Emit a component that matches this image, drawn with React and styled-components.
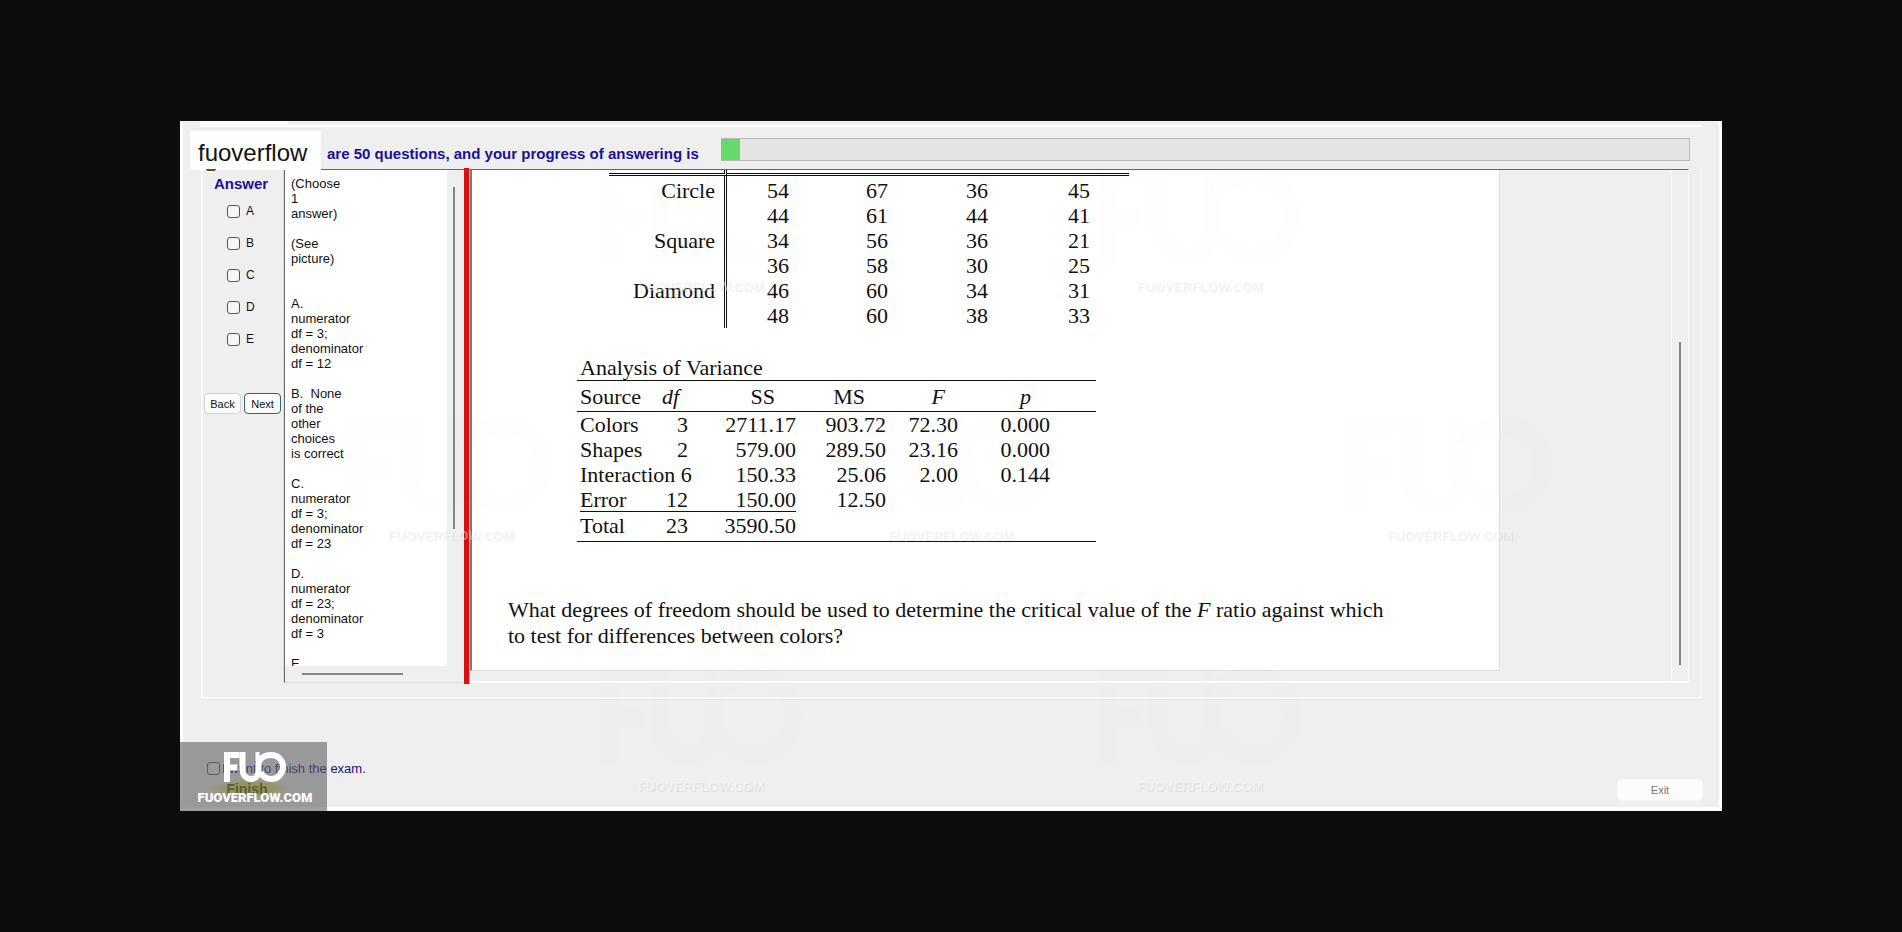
import React from 'react';
import styled, { createGlobalStyle, css } from 'styled-components';

const SANS = '"Liberation Sans", Arial, sans-serif';
const SERIF = '"Liberation Serif", "Times New Roman", serif';

const GlobalStyle = createGlobalStyle`
  *, *::before, *::after { box-sizing: border-box; }
  body { margin: 0; background: #0d0d0d; font-family: ${SANS}; color: #111; }
`;

const Stage = styled.main`
  min-height: 100vh;
  padding: 0 180px;
  display: flex;
  flex-direction: column;
  justify-content: center;
`;

const ExamWindow = styled.div`
  position: relative;
  background: #efefef;
  border: solid #fff;
  border-width: 0 3px 4px;
`;

const Header = styled.header`
  display: flex;
  align-items: flex-start;
  height: 48px;
  padding: 0 29px 0 7px;
  background:
    linear-gradient(#fbfbfb, #fbfbfb) 17px 0 / 88px 6px no-repeat,
    linear-gradient(#fff, #fff) 105px 4px / calc(100% - 122px) 2px no-repeat,
    #efefef;
`;

const SiteName = styled.div`
  position: relative;
  z-index: 2;
  width: 131px;
  height: 39px;
  margin-top: 10px;
  padding-left: 8px;
  background: #fff;
  font-size: 24px;
  line-height: 44px;

  &::after {
    content: '';
    position: absolute;
    left: 16px;
    bottom: -1px;
    width: 10px;
    height: 2px;
    border-radius: 0 0 5px 5px;
    background: #55551a;
  }
`;

const ProgressLabel = styled.label`
  margin: 23px 22px 0 6px;
  color: #1a1096;
  font-size: 15px;
  font-weight: bold;
  line-height: 20px;
  white-space: nowrap;
`;

const ProgressTrack = styled.div`
  flex: 1;
  height: 23px;
  margin-top: 17px;
  border: 1px solid #b9b9b9;
  border-left: 0;
  background: #e4e4e4;
`;

const ProgressFill = styled.div`
  height: 100%;
  background: #66d96b;
`;

const GroupBox = styled.section`
  display: flex;
  height: 530px;
  margin: 0 17px 0 18px;
  padding-right: 12px;
  border: solid #fafafa;
  border-width: 0 1px 2px 2px;
  box-shadow: 0 1px 0 #e4e4e4;
`;

const AnswerPanel = styled.fieldset`
  width: 81px;
  min-width: 0;
  height: 514px;
  margin: 0;
  padding: 5px 0 0;
  border: 0;
  border-right: 1px solid #e0e0e0;
`;

const AnswerTitle = styled.legend`
  float: left;
  width: 100%;
  padding: 0 0 0 11px;
  color: #1a1096;
  font-size: 15px;
  font-weight: bold;
  line-height: 20px;
`;

const ChoiceList = styled.div`
  clear: both;
  display: flex;
  flex-direction: column;
  padding: 1px 0 0 24px;
`;

const Choice = styled.label`
  display: flex;
  align-items: center;
  gap: 6px;
  height: 32px;
  font-size: 12px;
`;

const Tick = styled.input`
  appearance: none;
  width: 13px;
  height: 13px;
  margin: 0;
  border: 1px solid #555;
  border-radius: 3px;
  background: #f6f6f6;
`;

const NavButtons = styled.div`
  display: flex;
  gap: 3px;
  padding: 38px 0 0 1px;
`;

const Button = styled.button`
  height: 21px;
  padding: 0;
  border: 1px solid #d2d2d2;
  border-radius: 4px;
  background: #fcfcfc;
  color: #111;
  font: 11px ${SANS};
  ${(p) => p.$kind === 'nav' && css`width: 37px;`}
  ${(p) => p.$focused && css`border-color: #2c6780;`}
  ${(p) => p.$kind === 'exit' && css`
    width: 86px;
    height: 22px;
    border-color: #f6f6f6;
    color: #777;
  `}
`;

const ChoicesPane = styled.div`
  display: flex;
  flex-direction: column;
  width: 180px;
  height: 514px;
  border: 1px solid #666;
  border-bottom-color: #dcdcdc;
  border-right: 0;
`;

const ChoicesRow = styled.div`
  display: flex;
  height: 496px;
`;

const ChoicesText = styled.div`
  width: 162px;
  padding: 6px 0 0 6px;
  overflow: hidden;
  background: #fff;
  font-size: 13px;
  line-height: 15px;
  white-space: pre;
`;

const ScrollColumn = styled.div`
  width: 17px;
  padding: ${(p) => p.$top}px 0 0 6px;
`;

const Thumb = styled.div`
  width: ${(p) => p.$w}px;
  height: ${(p) => p.$h}px;
  background: #858585;
`;

const ScrollRow = styled.div`
  padding: 7px 0 0 17px;
`;

const Splitter = styled.div`
  width: 6px;
  height: 516px;
  margin-top: -1px;
  background: linear-gradient(90deg, #db0f12 5px, #e8aaa4 5px);
`;

const PicturePane = styled.div`
  flex: 1;
  display: flex;
  justify-content: space-between;
  height: 514px;
  border: solid;
  border-width: 1px 1px 2px 0;
  border-color: #666 #fff #fff #fff;
`;

const Picture = styled.article`
  width: 1030px;
  height: 501px;
  border: solid #dedede;
  border-width: 0 1px 1px 2px;
  border-left-color: #857676;
  background: #fff;
  font: 22px/25px ${SERIF};
  color: #111;
`;

const ShapeTable = styled.table`
  margin-left: 137px;
  border-spacing: 0;
  border-collapse: separate;
  table-layout: fixed;
  width: 520px;

  th, td { padding: 0; font-weight: normal; height: 25px; text-align: center; }
  th { padding-right: 9px; text-align: right; border-right: 3px double #111; }
  thead th, thead td { height: 6px; border-bottom: 3px double #111; }
  tbody tr:first-child > * { height: 27px; padding-top: 2px; }
`;

const AnovaTable = styled.table`
  width: 519px;
  margin: 27px 0 0 105px;
  border-spacing: 0;
  table-layout: fixed;
  border-bottom: 1px solid #111;

  caption { padding-left: 3px; text-align: left; }
  th, td { padding: 0; font-weight: normal; height: 25px; text-align: right; white-space: nowrap; }
  th:first-child { padding-left: 3px; text-align: left; }
  thead th {
    height: 32px;
    border: solid #111;
    border-width: 1px 0;
  }
  tbody tr:last-child > * { height: 29px; padding: 1px 0 3px; }
  tbody tr:last-child > th { padding-left: 3px; }
`;

const HeadCell = styled.th`
  && { padding-right: ${(p) => p.$inset || 0}px; }
`;

const SumCell = styled.td`
  background: linear-gradient(#111, #111) left bottom / 100% 1px no-repeat content-box;
`;

const Question = styled.p`
  margin: 55px 0 0 36px;
  line-height: 26px;
`;

const ScrollGutter = styled.div`
  width: 17px;
  padding: 172px 0 0 7px;
  border-left: 1px solid #fafafa;
`;

const Footer = styled.footer`
  display: flex;
  justify-content: space-between;
  align-items: flex-start;
  height: 108px;
  padding: 58px 16px 0 24px;
`;

const FinishGroup = styled.div`
  display: flex;
  flex-direction: column;
`;

const FinishLabel = styled.label`
  display: flex;
  align-items: center;
  gap: 2px;
  height: 22px;
  color: #1a1080;
  font-size: 13px;
`;

const FinishButton = styled.button`
  width: 84px;
  height: 20px;
  padding: 0 4px 0 0;
  border: 0;
  background: radial-gradient(closest-side, #e4e444 40%, #efefef);
  color: #555500;
  font: bold 14px/20px ${SANS};
`;

const ExitSlot = styled.div`
  padding-top: 22px;
`;

const Badge = styled.div`
  position: absolute;
  left: -3px;
  bottom: -4px;
  width: 147px;
  height: 69px;
  padding: 10px 0 0 3px;
  display: flex;
  flex-direction: column;
  align-items: center;
  gap: 6px;
  background: rgba(95, 95, 95, 0.6);
  color: #fff;
  font: 900 13px/20px Roboto, ${SANS};
  pointer-events: none;
`;

const Watermark = styled.div`
  position: absolute;
  left: ${(p) => p.$x}px;
  top: ${(p) => p.$y}px;
  width: 204px;
  display: flex;
  flex-direction: column;
  align-items: center;
  gap: 10px;
  color: rgba(255, 255, 255, 0.4);
  text-shadow: 1px 1px 1px rgba(0, 0, 0, 0.07);
  font: bold 13px/16px ${SANS};
  pointer-events: none;
`;

function Logo({ width, height, color }) {
  return (
    <svg width={width} height={height} viewBox="0 0 62 30" fill="none" stroke={color} strokeWidth="6" aria-hidden="true">
      <path d="M3 30V3H15.5M3 15.5H13.5" />
      <path d="M18.5 0V17.5C18.5 23 22 27 27 27C32 27 34.5 23 34.5 18.5V13C34.5 7 40 3 47 3C54 3 59 8 59 14.8C59 21.5 54 27 47.5 27C42 27 38.5 24 36.5 20.5" />
      <path d="M33.5 0V9" strokeWidth="4" />
    </svg>
  );
}

const choicesText = `(Choose
1
answer)

(See
picture)


A.
numerator
df = 3;
denominator
df = 12

B.  None
of the
other
choices
is correct

C.
numerator
df = 3;
denominator
df = 23

D.
numerator
df = 23;
denominator
df = 3

E.`;

const shapeRows = [
  ['Circle', 54, 67, 36, 45],
  ['', 44, 61, 44, 41],
  ['Square', 34, 56, 36, 21],
  ['', 36, 58, 30, 25],
  ['Diamond', 46, 60, 34, 31],
  ['', 48, 60, 38, 33],
];

const watermarks = [
  [596, 42], [1095, 42],
  [346, 291], [846, 291], [1345, 291],
  [596, 542], [1095, 542],
];

export default function App() {
  return (
    <Stage>
      <GlobalStyle />
      <ExamWindow>
        <Header>
          <SiteName>fuoverflow</SiteName>
          <ProgressLabel id="progress-label">are 50 questions, and your progress of answering is</ProgressLabel>
          <ProgressTrack role="progressbar" aria-labelledby="progress-label" aria-valuenow={2}>
            <ProgressFill style={{ width: '2%' }} />
          </ProgressTrack>
        </Header>

        <GroupBox>
          <AnswerPanel>
            <AnswerTitle>Answer</AnswerTitle>
            <ChoiceList>
              {['A', 'B', 'C', 'D', 'E'].map((c) => (
                <Choice key={c}>
                  <Tick type="checkbox" name={c} />
                  {c}
                </Choice>
              ))}
            </ChoiceList>
            <NavButtons>
              <Button type="button" $kind="nav">Back</Button>
              <Button type="button" $kind="nav" $focused>Next</Button>
            </NavButtons>
          </AnswerPanel>

          <ChoicesPane>
            <ChoicesRow>
              <ChoicesText>{choicesText}</ChoicesText>
              <ScrollColumn $top={17}>
                <Thumb $w={2} $h={342} />
              </ScrollColumn>
            </ChoicesRow>
            <ScrollRow>
              <Thumb $w={101} $h={2} />
            </ScrollRow>
          </ChoicesPane>

          <Splitter />

          <PicturePane>
            <Picture>
              <ShapeTable>
                <colgroup>
                  <col style={{ width: 118 }} />
                  <col style={{ width: 102 }} />
                  <col style={{ width: 96 }} />
                  <col style={{ width: 104 }} />
                  <col style={{ width: 100 }} />
                </colgroup>
                <thead>
                  <tr><th /><td /><td /><td /><td /></tr>
                </thead>
                <tbody>
                  {shapeRows.map(([name, ...values], i) => (
                    <tr key={i}>
                      <th scope="row">{name}</th>
                      {values.map((v, j) => <td key={j}>{v}</td>)}
                    </tr>
                  ))}
                </tbody>
              </ShapeTable>

              <AnovaTable>
                <caption>Analysis of Variance</caption>
                <colgroup>
                  <col style={{ width: 77 }} />
                  <col style={{ width: 34 }} />
                  <col style={{ width: 108 }} />
                  <col style={{ width: 90 }} />
                  <col style={{ width: 72 }} />
                  <col style={{ width: 92 }} />
                  <col style={{ width: 46 }} />
                </colgroup>
                <thead>
                  <tr>
                    <HeadCell>Source</HeadCell>
                    <HeadCell $inset={9}><i>df</i></HeadCell>
                    <HeadCell $inset={21}>SS</HeadCell>
                    <HeadCell $inset={21}>MS</HeadCell>
                    <HeadCell $inset={13}><i>F</i></HeadCell>
                    <HeadCell $inset={19}><i>p</i></HeadCell>
                    <HeadCell />
                  </tr>
                </thead>
                <tbody>
                  <tr><th scope="row">Colors</th><td>3</td><td>2711.17</td><td>903.72</td><td>72.30</td><td>0.000</td><td /></tr>
                  <tr><th scope="row">Shapes</th><td>2</td><td>579.00</td><td>289.50</td><td>23.16</td><td>0.000</td><td /></tr>
                  <tr><th scope="row" colSpan={2}>Interaction 6</th><td>150.33</td><td>25.06</td><td>2.00</td><td>0.144</td><td /></tr>
                  <tr><SumCell as="th" scope="row">Error</SumCell><SumCell>12</SumCell><SumCell>150.00</SumCell><td>12.50</td><td /><td /><td /></tr>
                  <tr><th scope="row">Total</th><td>23</td><td>3590.50</td><td /><td /><td /><td /></tr>
                </tbody>
              </AnovaTable>

              <Question>
                What degrees of freedom should be used to determine the critical value of the <i>F</i> ratio against which
                <br />
                to test for differences between colors?
              </Question>
            </Picture>
            <ScrollGutter>
              <Thumb $w={2} $h={323} />
            </ScrollGutter>
          </PicturePane>
        </GroupBox>

        <Footer>
          <FinishGroup>
            <FinishLabel>
              <Tick type="checkbox" name="finish" />
              I want to finish the exam.
            </FinishLabel>
            <FinishButton type="button">Finish</FinishButton>
          </FinishGroup>
          <ExitSlot>
            <Button type="button" $kind="exit">Exit</Button>
          </ExitSlot>
        </Footer>

        {watermarks.map(([x, y]) => (
          <Watermark key={`${x}-${y}`} $x={x - 180} $y={y}>
            <Logo width={204} height={106} color="rgba(0, 0, 0, 0.004)" />
            FUOVERFLOW.COM
          </Watermark>
        ))}

        <Badge>
          <Logo width={62} height={30} color="#fff" />
          FUOVERFLOW.COM
        </Badge>
      </ExamWindow>
    </Stage>
  );
}
